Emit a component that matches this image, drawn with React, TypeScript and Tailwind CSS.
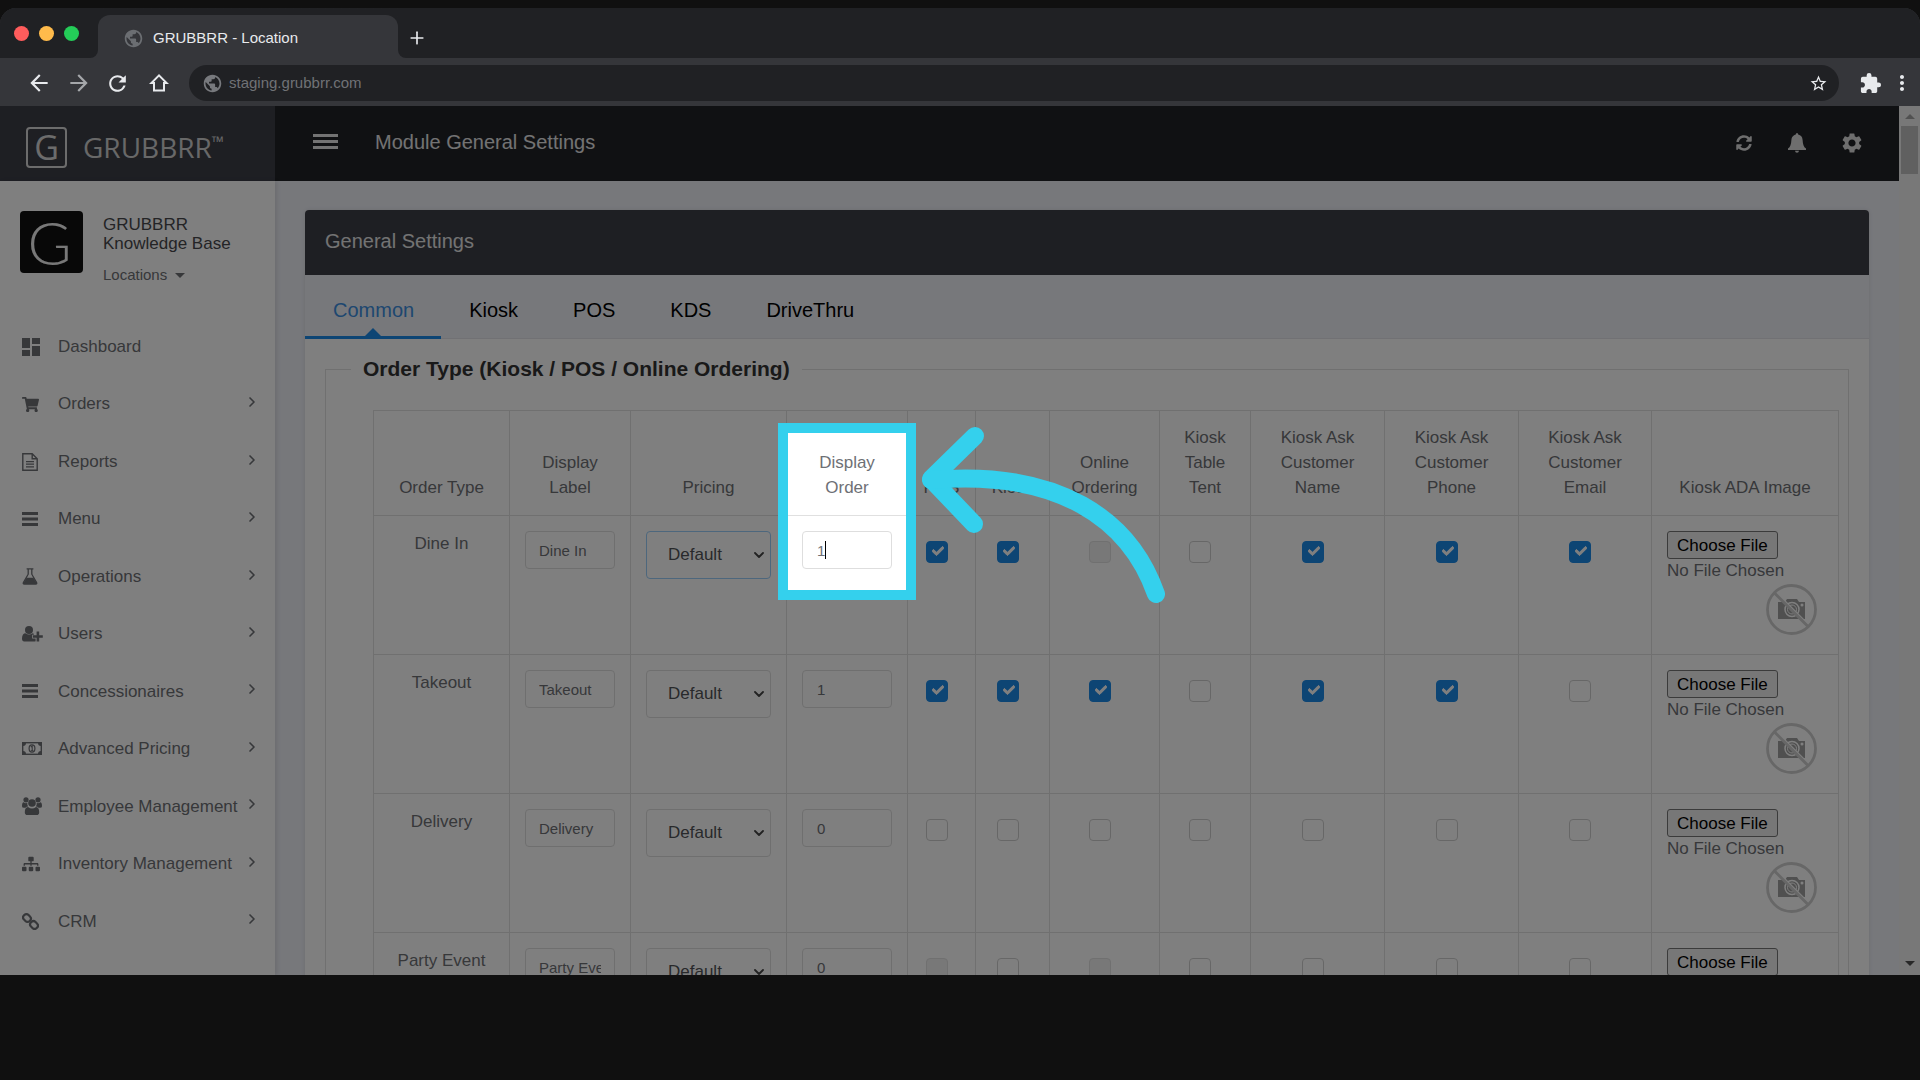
import React, { useState } from "react";
import { ChevronDown, ChevronRight, Plus } from "lucide-react";
import { FaCheck, FaShoppingCart, FaSitemap, FaSyncAlt } from "react-icons/fa";
import {
    MdArrowBack,
    MdArrowForward,
    MdDashboard,
    MdExtension,
    MdMoreVert,
    MdPublic,
    MdRefresh,
    MdSettings,
    MdStarBorder,
} from "react-icons/md";

type CheckState = "on" | "off" | "disabled";

interface OrderTypeRow {
    name: string;
    label: string;
    order: string;
    checks: CheckState[];
    focused?: boolean;
}

interface NavItem {
    label: string;
    icon: React.ReactNode;
    leaf?: boolean;
}

function BarsIcon() {
    return (
        <svg width="16" height="14" viewBox="0 0 16 14" fill="currentColor">
            <path d="M0 0h16v3H0zM0 5.5h16v3H0zM0 11h16v3H0z" />
        </svg>
    );
}

function FileIcon() {
    return (
        <svg width="16" height="18" viewBox="0 0 16 18" fill="none" stroke="currentColor" strokeWidth="1.4">
            <path d="M.8.8h9.4l5 5v11.4H.8zM10.2.8v5h5" />
            <path d="M4 8.6h8M4 11.2h8M4 13.8h8" strokeWidth="1.2" />
        </svg>
    );
}

function FlaskIcon() {
    return (
        <svg width="16" height="17" viewBox="0 0 16 17" fill="none" stroke="currentColor" strokeWidth="1.3">
            <path d="M4.6.8h6.8M6.2.8v5.4L1.4 14.6q-.6 1.4.8 1.4h11.6q1.4 0 .8-1.4L9.8 6.2V.8" />
            <path d="M4.6 9.8h6.8l3.2 5.4q.2.8-.8.8H2.2q-1 0-.8-.8z" fill="currentColor" stroke="none" />
        </svg>
    );
}

function UserPlusIcon() {
    return (
        <svg width="21" height="16" viewBox="0 0 21 16" fill="currentColor">
            <circle cx="7" cy="4" r="4" />
            <path d="M0 12.6C0 9 1.6 7.4 3.4 7.3q3.6 2.6 7.2 0 .6 0 1.2.4v1.1h-1.6v3.8h3.4v2.6q-.4.4-1 .4H2.2Q0 15.6 0 12.6z" />
            <path d="M14.6 5.6h2.6v3.6h3.6v2.6h-3.6v3.6h-2.6v-3.6H11V9.2h3.6z" />
        </svg>
    );
}

function MoneyIcon() {
    return (
        <svg width="20" height="13" viewBox="0 0 20 13" fill="none" stroke="currentColor">
            <rect x=".7" y=".7" width="18.6" height="11.6" strokeWidth="1.4" />
            <ellipse cx="10" cy="6.5" rx="2.9" ry="3.6" strokeWidth="1.2" />
            <path d="M8.8 5l1.4-.9v4.6M8.8 8.8h2.6" strokeWidth="1.1" />
            <path d="M1 1h3Q4 4 1 4zM19 1h-3q0 3 3 3zM1 12h3q0-3-3-3zM19 12h-3q0-3 3-3z" fill="currentColor" stroke="none" />
        </svg>
    );
}

function UsersIcon() {
    return (
        <svg width="20" height="18" viewBox="0 0 20 18" fill="currentColor">
            <circle cx="4" cy="2.8" r="2.6" />
            <circle cx="16" cy="2.8" r="2.6" />
            <circle cx="10" cy="6" r="3.8" />
            <path d="M0 9.2Q0 5.4 1.7 5.2q2 1.6 3.6.6-.3 2 .8 3.8-1.6 0-2.6 1.2H2Q0 10.8 0 9.2zM20 9.2q0-3.8-1.7-4-2 1.6-3.6.6.3 2-.8 3.8 1.6 0 2.6 1.2H18q2 0 2-1.6z" />
            <path d="M2.8 15.2q0-5 3.2-5.3 4 3.2 8 0 3.2.3 3.2 5.3 0 2.8-2.6 2.8H5.4q-2.6 0-2.6-2.8z" />
        </svg>
    );
}

function LinkIcon() {
    return (
        <svg width="17" height="17" viewBox="0 0 17 17" fill="none" stroke="currentColor" strokeWidth="2.2">
            <rect x="1" y="1.8" width="8" height="6.4" rx="3" transform="rotate(45 5 5)" />
            <rect x="8" y="8.8" width="8" height="6.4" rx="3" transform="rotate(45 12 12)" />
        </svg>
    );
}

function BellIcon() {
    return (
        <svg width="18" height="20" viewBox="0 0 18 20" fill="currentColor">
            <path d="M7.8 1.6Q7.8 0 9 0t1.2 1.6Q14.2 2.4 14.6 7c.3 4.4 1 7 3.4 8.6V17H0v-1.4C2.4 14 3.1 11.4 3.4 7 3.8 2.4 7.8 1.6 7.8 1.6zM7 17.8h4Q10.8 19.8 9 19.8T7 17.8z" />
        </svg>
    );
}

function HomeIcon() {
    return (
        <svg width="20" height="20" viewBox="0 0 20 20" fill="none" stroke="currentColor" strokeWidth="2">
            <path d="M10 2.4L2.4 10H5v7.6h10V10h2.6z" />
        </svg>
    );
}

function NoImageIcon() {
    return (
        <svg width="51" height="51" viewBox="0 0 51 51" fill="none" aria-label="No image">
            <path d="M12 18h7l2-3h10l2 3h6v17H12z" fill="#a0a0a0" />
            <circle cx="26" cy="25.5" r="7" fill="#a0a0a0" stroke="#fff" strokeWidth="1.5" />
            <circle cx="26" cy="25.5" r="4.5" stroke="#fff" strokeWidth="1" />
            <circle cx="36" cy="21" r="1.5" fill="#fff" />
            <path d="M9.5 8l33 33" stroke="#fff" strokeWidth="2" />
            <path d="M8.5 9l34 34" stroke="#cfcfcf" strokeWidth="3" />
            <circle cx="25.5" cy="25.5" r="24" stroke="#cfcfcf" strokeWidth="2.8" />
        </svg>
    );
}

const navItems: NavItem[] = [
    { label: "Dashboard", icon: <MdDashboard size={24} className="-ml-[3px]" />, leaf: true },
    { label: "Orders", icon: <FaShoppingCart size={17} /> },
    { label: "Reports", icon: <FileIcon /> },
    { label: "Menu", icon: <BarsIcon /> },
    { label: "Operations", icon: <FlaskIcon /> },
    { label: "Users", icon: <UserPlusIcon /> },
    { label: "Concessionaires", icon: <BarsIcon /> },
    { label: "Advanced Pricing", icon: <MoneyIcon /> },
    { label: "Employee Management", icon: <UsersIcon /> },
    { label: "Inventory Management", icon: <FaSitemap size={18} /> },
    { label: "CRM", icon: <LinkIcon /> },
];

const tabs = ["Common", "Kiosk", "POS", "KDS", "DriveThru"];

const checkColumns = [
    "POS",
    "Kiosk",
    "Online Ordering",
    "Kiosk Table Tent",
    "Kiosk Ask Customer Name",
    "Kiosk Ask Customer Phone",
    "Kiosk Ask Customer Email",
];

const rows: OrderTypeRow[] = [
    {
        name: "Dine In",
        label: "Dine In",
        order: "1",
        checks: ["on", "on", "disabled", "off", "on", "on", "on"],
        focused: true,
    },
    {
        name: "Takeout",
        label: "Takeout",
        order: "1",
        checks: ["on", "on", "on", "off", "on", "on", "off"],
    },
    {
        name: "Delivery",
        label: "Delivery",
        order: "0",
        checks: ["off", "off", "off", "off", "off", "off", "off"],
    },
    {
        name: "Party Event",
        label: "Party Event",
        order: "0",
        checks: ["disabled", "off", "disabled", "off", "off", "off", "off"],
    },
];

function BrowserChrome() {
    return (
        <div className="rounded-t-2xl overflow-hidden bg-[#35363a] text-[#e8eaed]">
            {/* Tab strip */}
            <div className="flex h-[50px]">
                <div className="w-[98px] bg-[#202124] rounded-br-lg flex items-center gap-[10px] pl-[14px]">
                    <span className="size-[15px] rounded-full bg-[#ff5c5c]" />
                    <span className="size-[15px] rounded-full bg-[#ffbb4b]" />
                    <span className="size-[15px] rounded-full bg-[#24cc58]" />
                </div>
                <div className="w-[300px] bg-linear-to-b from-[#202124] from-50% to-[#35363a] to-50% pt-[7px]">
                    <div className="h-full rounded-t-xl bg-[#35363a] flex items-center pl-[25px] pt-[3px]">
                        <MdPublic size={21} className="text-[#6b6e72]" />
                        <span className="ml-[9px] text-[15px]">GRUBBRR - Location</span>
                    </div>
                </div>
                <div className="flex-1 bg-[#202124] rounded-bl-lg flex items-center pl-[9px] pt-[9px]">
                    <button aria-label="New tab" className="cursor-pointer">
                        <Plus size={20} strokeWidth={2} />
                    </button>
                </div>
            </div>

            {/* Toolbar */}
            <div className="flex items-center h-12 pt-[2px] pl-[26px] pr-[6px]">
                <button aria-label="Back" className="cursor-pointer">
                    <MdArrowBack size={26} />
                </button>
                <button aria-label="Forward" className="ml-[14px] text-[#a5a7aa] cursor-pointer">
                    <MdArrowForward size={26} />
                </button>
                <button aria-label="Reload" className="ml-[13px] cursor-pointer">
                    <MdRefresh size={25} />
                </button>
                <button aria-label="Home" className="ml-[19px] cursor-pointer">
                    <HomeIcon />
                </button>
                <div className="flex-1 flex items-center h-9 ml-[20px] rounded-full bg-[#202124] pl-[13px] pr-2">
                    <MdPublic size={21} className="text-[#77797d]" />
                    <input
                        aria-label="Address"
                        defaultValue="staging.grubbrr.com"
                        className="flex-1 ml-[6px] text-[15px] text-[#707276] bg-transparent outline-none"
                    />
                    <MdStarBorder size={19} className="mr-[3px]" />
                </div>
                <MdExtension size={23} className="ml-5" />
                <button aria-label="Browser menu" className="ml-2 cursor-pointer">
                    <MdMoreVert size={24} />
                </button>
            </div>
        </div>
    );
}

function Sidebar() {
    return (
        <aside className="w-[275px] shrink-0 bg-white shadow-[2px_0_4px_rgba(0,0,0,0.1)] text-[#6e7075]">
            <div className="flex items-start gap-5 pl-5 pt-[30px] h-[137px]">
                <div className="flex items-center justify-center w-[63px] h-[62px] pr-1 rounded bg-[#111] text-[#f0f0f0] font-['Lato'] font-light text-[60px] leading-none">
                    G
                </div>
                <div className="pt-1">
                    <p className="w-[150px] text-[17px] leading-[19px] text-[#48494d]">GRUBBRR Knowledge Base</p>
                    <button className="flex items-center mt-3 text-[15px] leading-5 cursor-pointer">
                        Locations
                        <span className="ml-2 border-x-5 border-x-transparent border-t-5 border-t-[#6e7075]" />
                    </button>
                </div>
            </div>
            <nav className="flex flex-col h-[632px]">
                {navItems.map((item) => (
                    <a key={item.label} href="#" className="flex flex-1 items-center pl-[22px] pr-[15px] text-[17px]">
                        <span className="w-9 shrink-0">{item.icon}</span>
                        <span className="flex-1 whitespace-nowrap">{item.label}</span>
                        {!item.leaf && <ChevronRight size={16} strokeWidth={2.5} className="mb-1 shrink-0" />}
                    </a>
                ))}
            </nav>
        </aside>
    );
}

function AppHeader() {
    return (
        <header className="flex h-[75px] shrink-0 bg-[#202226] text-[#e6e6e6]">
            <div className="flex items-center w-[275px] pl-[26px] bg-[#3c3e47] font-['Open_Sans']">
                <span className="flex items-center justify-center size-[41px] mt-[7px] border-2 border-[#d8d8d8] rounded-sm text-[34px] leading-none text-[#d8d8d8]">
                    G
                </span>
                <span className="ml-4 mt-[7px] text-[28px] leading-none text-[#d0d0d0]">GRUBBRR</span>
                <span className="mb-1 text-base leading-none text-[#d0d0d0]">™</span>
            </div>
            <button
                aria-label="Toggle menu"
                className="ml-[38px] pb-1 flex flex-col justify-center gap-[3px] cursor-pointer"
            >
                <span className="w-[25px] h-[3px] bg-current" />
                <span className="w-[25px] h-[3px] bg-current" />
                <span className="w-[25px] h-[3px] bg-current" />
            </button>
            <h1 className="ml-[37px] pb-[3px] self-center text-xl">Module General Settings</h1>
            <div className="flex items-center ml-auto mr-[35px] pb-[2px] text-[#dcdcdc]">
                <button aria-label="Refresh" className="cursor-pointer">
                    <FaSyncAlt size={16} />
                </button>
                <button aria-label="Notifications" className="ml-9 cursor-pointer">
                    <BellIcon />
                </button>
                <button aria-label="Settings" className="ml-[34px] cursor-pointer">
                    <MdSettings size={24} />
                </button>
            </div>
        </header>
    );
}

function CheckBox({ state, label }: { state: CheckState; label: string }) {
    return (
        <span className="relative inline-block size-[22px] mt-[10px] mr-[10px] align-top">
            <input
                type="checkbox"
                aria-label={label}
                defaultChecked={state === "on"}
                disabled={state === "disabled"}
                className="peer block appearance-none size-[22px] rounded border border-[#cfcfcf] bg-white checked:border-[#1a8ae8] checked:bg-[#1a8ae8] disabled:bg-[#f0f0f0] disabled:border-[#e0e0e0]"
            />
            <FaCheck
                size={12}
                className="hidden peer-checked:block absolute left-[6px] top-1 text-white stroke-[40px] stroke-white pointer-events-none"
            />
        </span>
    );
}

/* Cyan frame around a header cell and the field under it, everything else is dimmed */
function Spotlight() {
    return (
        <>
            <div className="absolute z-40 -left-[9px] -right-[9px] top-3 h-[177px] border-10 border-[#34d0ed] shadow-[0_0_0_3000px_rgba(0,0,0,0.5)] pointer-events-none" />
            <svg
                width="244"
                height="186"
                viewBox="0 0 244 186"
                fill="none"
                stroke="#34d0ed"
                strokeWidth="18"
                strokeLinecap="round"
                strokeLinejoin="round"
                className="absolute z-50 left-[134px] top-[14px] max-w-none pointer-events-none"
            >
                <path d="M54 11L10 54l43 45" />
                <path d="M10 55C139 44 209 95 235 169" />
            </svg>
        </>
    );
}

function OrderTypeTable() {
    const th = "border border-[#e0e0e0] px-[14px] pt-[14px] pb-[15px] align-bottom font-normal text-center leading-[25px]";
    const td = "border border-[#e0e0e0] px-[15px] pt-[15px] align-top";
    const field = "block w-full border rounded outline-none bg-white";

    return (
        <table className="w-full table-fixed border-collapse text-[17px] text-[#6e7075]">
            <colgroup>
                <col className="w-[136px]" />
                <col className="w-[121px]" />
                <col className="w-[156px]" />
                <col className="w-[121px]" />
                <col className="w-[68px]" />
                <col className="w-[74px]" />
                <col className="w-[110px]" />
                <col className="w-[91px]" />
                <col className="w-[134px]" />
                <col className="w-[134px]" />
                <col className="w-[133px]" />
                <col className="w-[187px]" />
            </colgroup>
            <thead>
                <tr>
                    <th className={th}>Order Type</th>
                    <th className={th}>Display Label</th>
                    <th className={th}>Pricing</th>
                    <th className={`${th} relative`}>
                        Display Order
                        <Spotlight />
                    </th>
                    {checkColumns.map((name) => (
                        <th key={name} className={th}>
                            {name}
                        </th>
                    ))}
                    <th className={th}>Kiosk ADA Image</th>
                </tr>
            </thead>
            <tbody>
                {rows.map((row) => (
                    <tr key={row.name}>
                        <td className={`${td} text-center leading-[25px]`}>{row.name}</td>
                        <td className={td}>
                            <input
                                aria-label={`${row.name} display label`}
                                defaultValue={row.label}
                                className={`${field} h-[38px] px-[13px] text-[15px] border-[#dedede]`}
                            />
                        </td>
                        <td className={td}>
                            <div className="relative">
                                <select
                                    aria-label={`${row.name} pricing`}
                                    className={`${field} h-12 pl-[21px] appearance-none text-[#515357] ${
                                        row.focused ? "border-[#9acffa]" : "border-[#dedede]"
                                    }`}
                                >
                                    <option>Default</option>
                                </select>
                                <ChevronDown
                                    size={16}
                                    strokeWidth={2.75}
                                    className="absolute right-1 top-4 text-[#444] pointer-events-none"
                                />
                            </div>
                        </td>
                        <td className={td}>
                            <div className="relative">
                                <input
                                    aria-label={`${row.name} display order`}
                                    defaultValue={row.order}
                                    className={`${field} h-[38px] px-[14px] text-[15px] border-[#dedede]`}
                                />
                                {row.focused && <span className="absolute left-[23px] top-[10px] w-px h-[18px] bg-black" />}
                            </div>
                        </td>
                        {row.checks.map((state, i) => (
                            <td key={checkColumns[i]} className={`${td} text-center`}>
                                <CheckBox state={state} label={`${row.name} ${checkColumns[i]}`} />
                            </td>
                        ))}
                        <td className={td}>
                            <button className="block h-7 px-[9px] border border-[#767676] rounded-[3px] bg-[#efefef] text-black leading-[25px] cursor-pointer">
                                Choose File
                            </button>
                            <span className="block leading-6">No File Chosen</span>
                            <div className="flex justify-end mt-px mr-[6px] pb-[19px]">
                                <NoImageIcon />
                            </div>
                        </td>
                    </tr>
                ))}
            </tbody>
        </table>
    );
}

function SettingsCard() {
    const [active, setActive] = useState("Common");

    return (
        <section className="rounded bg-white shadow-[0_0_4px_rgba(0,0,0,0.1)]">
            <h2 className="h-[65px] pl-5 pb-1 flex items-center rounded-t bg-[#3c3e47] text-xl text-[#e6e6e6]">
                General Settings
            </h2>
            <div role="tablist" className="flex h-16 bg-[#eef0f7] border-b border-[#e2e3e8]">
                {tabs.map((tab) => (
                    <button
                        key={tab}
                        role="tab"
                        aria-selected={tab === active}
                        onClick={() => setActive(tab)}
                        className={`relative pl-7 pr-[27px] pt-2 text-xl cursor-pointer ${
                            tab === active
                                ? "text-[#3d8fe0] border-b-3 border-[#1a8ae8] -mb-px"
                                : "text-black pb-[2px]"
                        }`}
                    >
                        {tab}
                        {tab === active && (
                            <span className="absolute bottom-0 left-1/2 -translate-x-1/2 border-x-8 border-x-transparent border-b-8 border-b-[#1a8ae8]" />
                        )}
                    </button>
                ))}
            </div>
            <div className="px-5 pt-[15px]">
                <fieldset className="min-w-0 border border-[#e0e0e0] pl-[47px] pr-[9px]">
                    <legend className="-ml-[22px] px-3 text-[21px] leading-[30px] font-bold text-[#333]">
                        Order Type (Kiosk / POS / Online Ordering)
                    </legend>
                    <div className="pt-[26px]">
                        <OrderTypeTable />
                    </div>
                </fieldset>
            </div>
        </section>
    );
}

function PageScrollbar() {
    return (
        <div className="flex flex-col items-center justify-between w-[21px] shrink-0 bg-[#f1f1f1] pt-2 pb-[9px]">
            <div className="flex flex-col items-center">
                <span className="border-x-5 border-x-transparent border-b-5 border-b-[#a3a3a3]" />
                <span className="mt-[7px] w-[17px] h-12 bg-[#c1c1c1]" />
            </div>
            <span className="border-x-5 border-x-transparent border-t-5 border-t-[#505050]" />
        </div>
    );
}

export default function App() {
    return (
        <div className="flex flex-col h-screen pt-2 pb-[105px] bg-[#101010] font-['Liberation_Sans',Arial,sans-serif]">
            <BrowserChrome />
            <div className="relative flex flex-1 min-h-0 overflow-hidden bg-[#eef0f7]">
                <div className="flex flex-col flex-1 min-w-0">
                    <AppHeader />
                    <div className="flex flex-1 min-h-0">
                        <Sidebar />
                        <main className="flex-1 min-w-0 px-[30px] pt-[29px]">
                            <SettingsCard />
                        </main>
                    </div>
                </div>
                <PageScrollbar />
            </div>
        </div>
    );
}
